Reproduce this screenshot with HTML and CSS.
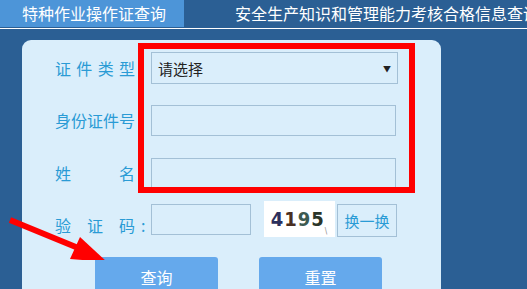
FILE: index.html
```html
<!DOCTYPE html>
<html lang="zh-CN">
<head>
<meta charset="utf-8">
<link rel="stylesheet" href="styles.css">
</head>
<body>
<div class="page">
  <div class="tabs">
    <div class="tab active">特种作业操作证查询</div>
    <div class="tab">安全生产知识和管理能力考核合格信息查询</div>
  </div>
  <div class="rule"></div>
  <div class="panel">
    <div class="row">
      <div class="label"><span>证</span><span>件</span><span>类</span><span>型</span></div>
      <div class="select"><span>请选择</span><span class="caret">▼</span></div>
    </div>
    <div class="row">
      <div class="label"><span>身份证件号</span></div>
      <div class="input"></div>
    </div>
    <div class="row">
      <div class="label"><span>姓</span><span>名</span></div>
      <div class="input"></div>
    </div>
    <div class="row captcha-row">
      <div class="label short-label"><span>验</span><span>证</span><span>码</span></div>
      <span class="colon">:</span>
      <div class="input short"></div>
      <div class="captcha"><span class="d1">4</span><span class="d2">1</span><span class="d3">9</span><span class="d4">5</span><span class="tick">\</span></div>
      <div class="refresh">换一换</div>
    </div>
    <div class="buttons">
      <div class="btn">查询</div>
      <div class="btn">重置</div>
    </div>
  </div>
  <div class="redbox"></div>
  <svg class="arrow" width="120" height="60" viewBox="0 0 120 60">
    <line x1="10" y1="20" x2="88" y2="52" stroke="#f00" stroke-width="6"/>
    <polygon points="107,62 80,37 70,59" fill="#f00"/>
  </svg>
</div>
</body>
</html>
```
FILE: styles.css
```css
html, body {
  margin: 0;
  padding: 0;
  overflow: hidden;
}
body {
  background: #2b5f94;
  font-family: "Noto Sans CJK SC", "Noto Sans", sans-serif;
}
.page {
  position: relative;
  width: 527px;
  height: 289px;
  overflow: hidden;
}
.tabs {
  display: flex;
  height: 27px;
  white-space: nowrap;
}
.tab {
  flex-shrink: 0;
  color: #fff;
  font-size: 16px;
  line-height: 27px;
  padding-left: 51px;
}
.tab.active {
  background: #4d95d8;
  width: 162px;
  padding-left: 22px;
}
.rule {
  height: 1px;
  margin-top: 1px;
  background: #fff;
}
.panel {
  margin: 11px 0 0 22px;
  width: 419px;
  height: 260px;
  background: #daeefb;
  border-radius: 9px 9px 0 0;
  padding: 12px 0 0 0;
  box-sizing: border-box;
  display: flex;
  flex-direction: column;
}
.row {
  display: flex;
  align-items: center;
  height: 32px;
  margin-bottom: 20px;
}
.row:nth-child(2) { margin-bottom: 21px; }
.row:nth-child(3) { margin-bottom: 12px; }
.label {
  width: 80px;
  margin-left: 33px;
  margin-right: 16px;
  display: flex;
  justify-content: space-between;
  color: #2a9bd5;
  font-size: 16px;
  line-height: 20px;
}
.select, .input {
  box-sizing: border-box;
  height: 32px;
  border: 1px solid #a3c0d6;
  background: #daeefb;
}
.select {
  width: 247px;
  display: flex;
  align-items: center;
  justify-content: space-between;
  padding: 0 6px;
  color: #222;
  font-size: 15px;
}
.caret {
  font-size: 8px;
  color: #222;
}
.input {
  width: 245px;
  height: 31px;
}
.captcha-row {
  height: 36px;
  margin-bottom: 20px;
  align-items: flex-start;
}
.captcha-row .label {
  margin-top: 14px;
}
.short-label {
  margin-right: 0;
}
.colon {
  margin: 14px 0 0 6px;
  color: #2a9bd5;
  font-size: 16px;
  line-height: 20px;
  width: 10px;
}
.input.short {
  width: 100px;
  height: 31px;
  margin-top: 3px;
}
.captcha {
  width: 71px;
  height: 36px;
  margin-left: 13px;
  background: #fff;
  display: flex;
  align-items: center;
  justify-content: center;
  font-family: "DejaVu Sans Condensed", "DejaVu Sans", sans-serif;
  font-weight: bold;
  font-size: 20px;
  letter-spacing: 1px;
}
.d1 { color: #2c2f5c; }
.d2 { color: #4a2f22; }
.d3 { color: #3d5a50; }
.d4 { color: #2b3529; }
.tick {
  font-size: 8px;
  color: #888;
  font-weight: normal;
  align-self: flex-end;
  margin-bottom: 1px;
}
.refresh {
  box-sizing: border-box;
  width: 60px;
  height: 33px;
  margin: 3px 0 0 2px;
  border: 1px solid #a3c0d6;
  color: #2a9bd5;
  font-size: 15px;
  display: flex;
  align-items: center;
  justify-content: center;
}
.buttons {
  display: flex;
  gap: 41px;
  margin-left: 73px;
}
.btn {
  width: 123px;
  height: 40px;
  background: #65a9ec;
  border-radius: 3px 3px 0 0;
  color: #fff;
  font-size: 16px;
  text-align: center;
  line-height: 40px;
}
.redbox {
  position: absolute;
  left: 138px;
  top: 43px;
  width: 265px;
  height: 138px;
  border: 6px solid #f00;
}
.arrow {
  position: absolute;
  left: 0;
  top: 200px;
}
```
